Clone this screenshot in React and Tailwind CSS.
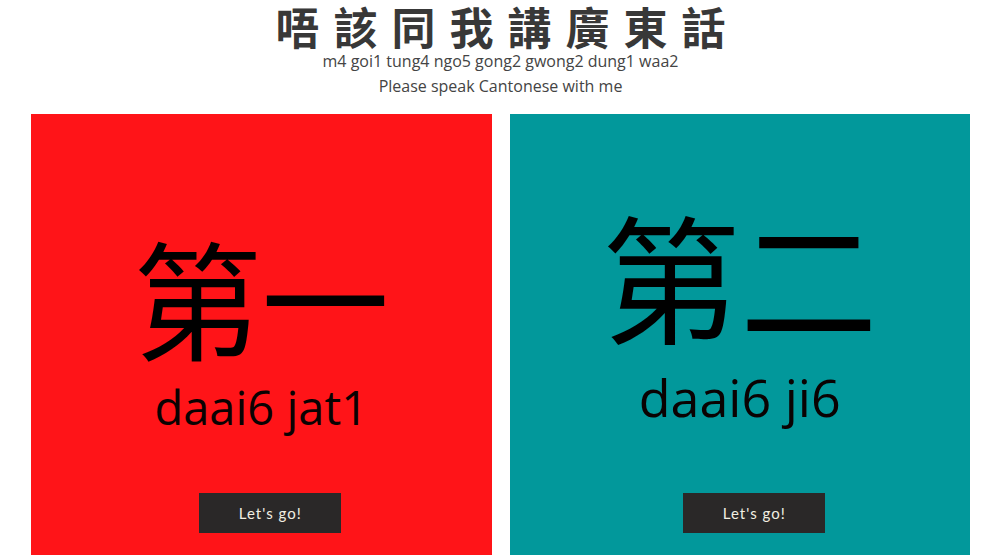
const cards = [
  {
    hanzi: "第一",
    jyutping: "daai6 jat1",
    bg: "bg-[#ff1418]",
    hanziClass: "pt-[118px] text-[128px] leading-[128px]",
    jyutClass: "mt-[24px] text-[47px] leading-[47px]",
    btnClass: "mt-[62px] ml-[18px]",
  },
  {
    hanzi: "第二",
    jyutping: "daai6 ji6",
    bg: "bg-[#02989b]",
    hanziClass: "pt-[90px] text-[138px] leading-[138px]",
    jyutClass: "mt-[29px] text-[52px] leading-[52px]",
    btnClass: "mt-[70px] ml-[29px]",
  },
];

function Card({ card }) {
  return (
    <div className={`${card.bg} h-[460px] flex flex-col items-center`}>
      <div
        className={`${card.hanziClass} text-black`}
        style={{ fontFamily: '"Noto Sans CJK TC", "Noto Sans CJK SC", sans-serif' }}
      >
        {card.hanzi}
      </div>
      <div
        className={`${card.jyutClass} text-[#0a0202]`}
        style={{ fontFamily: '"Open Sans", sans-serif' }}
      >
        {card.jyutping}
      </div>
      <button
        type="button"
        className={`${card.btnClass} w-[142px] h-[40px] bg-[#2a2828] text-[#f2efe2] text-[15px] tracking-[1px]`}
        style={{ fontFamily: 'Lato, "Liberation Sans", sans-serif' }}
      >
        Let's go!
      </button>
    </div>
  );
}

export default function App() {
  return (
    <div className="bg-white min-h-[555px] overflow-hidden pl-[10px]">
      <div className="text-center">
        <h1
          className="text-[44px] leading-[52px] font-bold text-[#383838] tracking-[14px] pl-[14px]"
          style={{ fontFamily: '"Noto Sans CJK TC", "Noto Sans CJK SC", sans-serif' }}
        >
          唔該同我講廣東話
        </h1>
        <div
          className="text-[16px] text-[#444444]"
          style={{ fontFamily: '"Open Sans", sans-serif' }}
        >
          <p className="leading-[18px]">m4 goi1 tung4 ngo5 gong2 gwong2 dung1 waa2</p>
          <p className="leading-[26px] mt-[3px]">Please speak Cantonese with me</p>
        </div>
      </div>
      <div className="grid grid-cols-2 gap-[18px] px-[21px] mt-[15px]">
        {cards.map((c) => (
          <Card key={c.hanzi} card={c} />
        ))}
      </div>
    </div>
  );
}
